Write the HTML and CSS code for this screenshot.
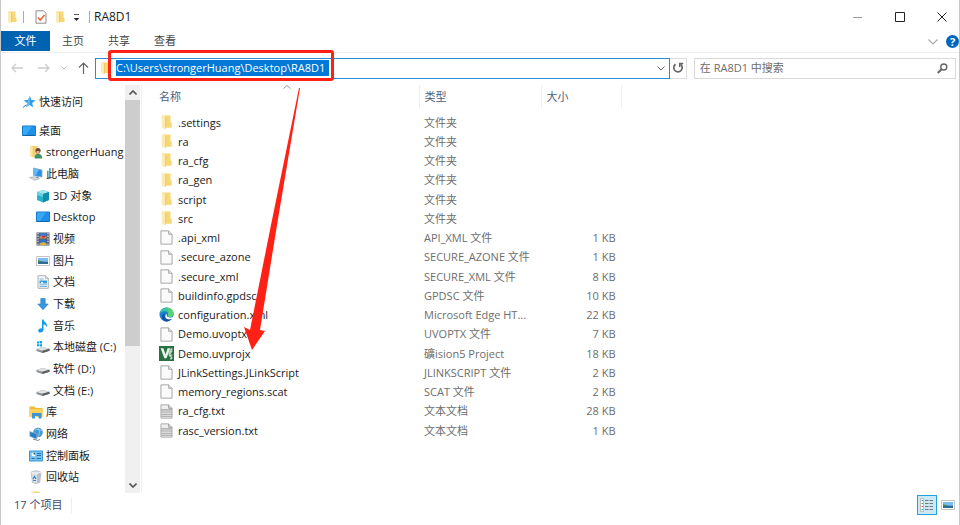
FILE: index.html
```html
<!DOCTYPE html>
<html lang="zh-CN">
<head>
  <meta charset="UTF-8" />
  <meta name="viewport" content="width=device-width, initial-scale=1.0" />
  <title>RA8D1</title>
  <link rel="stylesheet" href="styles.css">
</head>
<body>
  <!-- Icon set -->
  <svg class="sprite" aria-hidden="true">
    <symbol id="i-folder" viewBox="0 0 10 13">
      <path d="M1 .5h7.500v6H9.500V11H1z" fill="#f8d775"/>
      <path d="M1 .5l3 1V12.500L1 11z" fill="#fdebb5"/>
      <path d="M4 1.500V12.500l.7-1.500V1.700z" fill="#ecc564"/>
    </symbol>
    <symbol id="i-file" viewBox="0 0 12 14">
      <path d="M.8 .8h7.200l3.200 3.200v9.200H.8z" fill="#fafafa" stroke="#a3a3a3" stroke-width=".9"/>
      <path d="M8 .8V4h3.200" fill="#e9e9e9" stroke="#a3a3a3" stroke-width=".9"/>
    </symbol>
    <symbol id="i-text" viewBox="0 0 12 14">
      <path d="M.8 .8h7.200l3.200 3.200v9.200H.8z" fill="#eee" stroke="#aaa" stroke-width=".9"/>
      <path d="M8 .8V4h3.200" fill="#ddd" stroke="#999" stroke-width=".9"/>
      <path d="M1 5.500h10M1 7.500h10M1 9.500h10M1 11.500h10" stroke="#a0a0a0" stroke-width="1"/>
    </symbol>
    <symbol id="i-edge" viewBox="0 0 16 16">
      <circle cx="8" cy="8" r="7.500" fill="#1b7fd0"/>
      <path d="M.6 7C1.500 2.800 4.500 .5 8 .5c4.500 0 7.500 3 7.500 6.300 0 2.300-1.600 3.700-3.700 3.700-1.700 0-2.600-.7-2.300-1.500.4-.8.6-1.100.4-2C9.500 5.300 7.500 4.400 5.500 4.600 3.300 4.800 1.500 5.800.6 7z" fill="#3cc3a5"/>
      <path d="M8 .5c4.500 0 7.500 3 7.500 6.300 0 2.300-1.600 3.700-3.700 3.700-1.700 0-2.600-.7-2.300-1.500.4-.8.6-1.100.4-2C11 5 10.500 2 8 .5z" fill="#5fd36b"/>
      <path d="M5.800 8.500c-.3 3.500 2.500 5 5 4.700 1.500-.2 2.700-.9 3.300-1.400-1.300 2.400-3.700 3.700-6.400 3.600C4.500 15 3.300 12 3.500 10 3.700 8 4.800 7 6.500 6.600c-.4.500-.6 1.200-.7 1.900z" fill="#124f9f"/>
      <path d="M8.300 7.300c-.8 1.700.2 3.800 3.100 3.900 1.100 0 2.100-.2 3-.6l1.600.2v1.400l-2 .2c-2.300 1-5.700.9-6.900-1-.8-1.300-.3-3.500 1.200-4.100z" fill="#fff"/>
    </symbol>
    <symbol id="i-uvision" viewBox="0 0 14 14">
      <path d="M0 0h14v14H0z" fill="#2b7040"/>
      <path d="M1.500 2h2.600l2 6L8 2h2.500L7 11.500H5z" fill="#e8f3eb"/>
      <path d="M8.500 6.500L11 2h1.500v3L9.500 10z" fill="#b6d3be"/>
      <path d="M12.500 8.500h-2v1.700h1.500v1.800h-1.800" fill="none" stroke="#fff" stroke-width=".8"/>
    </symbol>
    <symbol id="i-star" viewBox="0 0 14 14">
      <path d="M8 1l1.300 3.900 4.200.3-3.300 2.700.9 4.300-3.600-2.300-3.400 2.200 1-4.100L1.500 5.300l4.300-.2z" fill="#2e9be6"/>
      <path d="M8 1l-.5 8.900L4.100 12.100l1-4.100" fill="#67bdf3"/>
      <path d="M1 12.500l3-2.500" stroke="#2878b8"/>
    </symbol>
    <symbol id="i-desktop" viewBox="0 0 14 14">
      <path d="M.5 2h13v9.500H.5z" fill="#1e90ea" stroke="#1678c8"/>
      <path d="M1 2.500h9L4 11H1z" fill="#37a9f5"/>
      <path d="M1 11.500h12" stroke="#0c5f9e" stroke-width=".8"/>
    </symbol>
    <symbol id="i-user" viewBox="0 0 14 14">
      <path d="M1 1h7.500v10L4 12.500 1 11z" fill="#f5d06f"/>
      <path d="M1 1l2.500 1v10.500L1 11z" fill="#fbe7aa"/>
      <circle cx="9" cy="5.500" r="2.600" fill="#6b4a3a"/>
      <path d="M7.500 6h3v3h-3z" fill="#e0a883"/>
      <path d="M5.500 13.500c0-3 1.300-4.700 3.700-4.700s4 1.700 4 4.700z" fill="#3c9468"/>
    </symbol>
    <symbol id="i-pc" viewBox="0 0 14 14">
      <path d="M4.500 1l8.500 2v7L4.500 8.500z" fill="#2792e3" stroke="#8ba8c1" stroke-width=".8"/>
      <path d="M5 1.600l5 1.100-3.500 5.700L5 8z" fill="#65baf5"/>
      <path d="M7 9.500l3 .5-1 1.500-2-.3z" fill="#8899a8"/>
      <path d="M.5 10.500l5-.8 5 2-5 1.500z" fill="#d2d9df" stroke="#97a3ad" stroke-width=".6"/>
    </symbol>
    <symbol id="i-cube" viewBox="0 0 14 14">
      <path d="M1 3l6-2 6 2v8l-6 2.500L1 11z" fill="#29b2cf"/>
      <path d="M1 3l6-2 6 2-6 2z" fill="#a5e8f0"/>
      <path d="M7 5l6-2v8l-6 2.500z" fill="#138ba9"/>
      <path d="M1 3l6 2v3L1 6z" fill="#64d2e2"/>
    </symbol>
    <symbol id="i-video" viewBox="0 0 14 14">
      <path d="M.5 .5h13v13H.5z" fill="#545b63"/>
      <path d="M3.500 1h7v5.500h-7z" fill="#3b79d4"/>
      <path d="M3.500 7.500h7V13h-7z" fill="#3472c9"/>
      <path d="M3.500 5l3-1.500 4 1.500v1.500h-7z" fill="#d98735"/>
      <path d="M6 4h3v1.500H6z" fill="#c42f38"/>
      <path d="M3.500 11.500l4-1.500 3 1.500V13h-7z" fill="#e0b23e"/>
      <path d="M2 1v12M12 1v12" stroke="#e4e7ea" stroke-width="1.300" stroke-dasharray="1.300 1.300"/>
    </symbol>
    <symbol id="i-picture" viewBox="0 0 14 14">
      <path d="M.5 2.500h13v9H.5z" fill="#fff" stroke="#b5b5b5" stroke-width=".8"/>
      <path d="M2 4h10v6H2z" fill="#79bdf0"/>
      <path d="M2 7c3-.5 6 1 10 .8V10H2z" fill="#2f6d91"/>
      <path d="M2 6c2 .5 3 1.300 5 2H2z" fill="#4b8c58"/>
    </symbol>
    <symbol id="i-docs" viewBox="0 0 14 14">
      <path d="M2 .7h7.500L12.300 3.500v9.800H2z" fill="#f5f8fa" stroke="#98a0a6" stroke-width=".8"/>
      <path d="M9.500 .7v2.800h2.800" fill="#d7e0e6" stroke="#98a0a6" stroke-width=".6"/>
      <path d="M3.500 4h4M3.500 11.500h7.500M3.500 9.800h7.500" stroke="#7ab3d8"/>
      <path d="M3.500 5.500h7.500v3H3.500z" fill="#3c9bd6"/>
      <path d="M5 7h2v1.500H5z" fill="#fff"/>
    </symbol>
    <symbol id="i-download" viewBox="0 0 14 14">
      <path d="M4.800 1.500h4.400V7h3L7 12.800 1.800 7h3z" fill="#3a96dd" stroke="#2278bd" stroke-width=".6"/>
    </symbol>
    <symbol id="i-music" viewBox="0 0 14 14">
      <path d="M6 .5h1.500c.3 2.800 4.500 3.500 3.500 8-.6-2-2-2.800-3.500-3.200v5.500c0 1.600-1.500 2.700-3 2.700s-2.500-.9-2.300-2.100C2.500 10 4.400 9 6 9.300z" fill="#1598e8"/>
    </symbol>
    <symbol id="i-drive" viewBox="0 0 14 14">
      <path d="M.5 8l6-2 7 1.800v2L6.500 12 .5 10z" fill="#8b8f92"/>
      <path d="M.5 8l6-2 7 1.800-7 2z" fill="#dfe1e2"/>
      <path d="M6.500 9.800l7-2v2l-7 2.200z" fill="#5b5f62"/>
    </symbol>
    <symbol id="i-system" viewBox="0 0 14 14">
      <use href="#i-drive" y="1"/>
      <path d="M1 1.500h2v2H1zM3.600 1.100H6v2.400H3.600zM1 4.200h2v2H1zM3.600 4.200H6v2.300H3.600z" fill="#00a8ee"/>
    </symbol>
    <symbol id="i-library" viewBox="0 0 14 14">
      <path d="M.5 1.500h5l1 1.500h7v9H.5z" fill="#f3b932"/>
      <path d="M.5 4h13v8H.5z" fill="#fbd25d"/>
      <path d="M3 8h9.500v5.500h-3V11H6v2.500H3z" fill="#3f94d4"/>
    </symbol>
    <symbol id="i-network" viewBox="0 0 14 14">
      <circle cx="9" cy="5.500" r="4.800" fill="#4598d6"/>
      <path d="M6 3c2-1.500 4.500 0 7 .5M9 1c2 2 2 6 0 9" fill="none" stroke="#a7d4f2" stroke-width=".8"/>
      <path d="M.8 4.500l7 2.300v5.500l-7-3z" fill="#237fc5" stroke="#a0b7c8" stroke-width=".7"/>
      <path d="M4 12l5 1.500 2-1.200" fill="none" stroke="#7c8b96"/>
    </symbol>
    <symbol id="i-control" viewBox="0 0 14 14">
      <path d="M.5 2h13v10H.5z" fill="#75c3ee" stroke="#3d95cf"/>
      <circle cx="4.500" cy="5.500" r="2" fill="#fff"/>
      <path d="M4.500 3.500v2h2a2 2 0 0 0-2-2z" fill="#1e5e98"/>
      <path d="M8 4.500h4M8 6.500h4M2.500 9.500h3M7.500 9.500h4.500" stroke="#2270ad"/>
    </symbol>
    <symbol id="i-bin" viewBox="0 0 14 14">
      <path d="M2 2l5-1.200L12 2l-1.300 10.500L7 13.500l-3.500-1z" fill="#dce1e5" stroke="#a8b0b6" stroke-width=".7"/>
      <path d="M8 3.500l4-1.500-1.300 10.500L8 13.200z" fill="#b9c1c7"/>
      <path d="M2 2l6 1.500L12 2" fill="none" stroke="#f7f8f9"/>
      <path d="M4 9l1.500-2.500L7 9M4.200 10.500h2.600" fill="none" stroke="#2586d0" stroke-width="1.200"/>
    </symbol>
  </svg>

  <div class="window">
    <header class="title-bar">
      <svg class="folder"><use href="#i-folder"/></svg>
      <span class="bar"></span>
      <button class="quick-button" aria-label="属性">
        <svg width="12" height="14" viewBox="0 0 12 14" fill="none">
          <path d="M1 .8h7.500l2.500 2.500v9.900H1z" fill="#fcfcfc" stroke="#8f8f8f"/>
          <path d="M3 7.500l2.300 2.500L9.500 5" stroke="#f06136" stroke-width="1.600"/>
        </svg>
      </button>
      <button class="quick-button new-folder" aria-label="新建文件夹"><svg class="folder"><use href="#i-folder"/></svg></button>
      <button class="quick-button small" aria-label="自定义快速访问工具栏">
        <svg width="7" height="8" viewBox="0 0 7 8"><path d="M1 1.500h5" stroke="#555"/><path d="M.8 5h5.400L3.500 8z" fill="#222"/></svg>
      </button>
      <span class="bar"></span>
      <h1 class="window-title">RA8D1</h1>
      <div class="window-buttons">
        <button aria-label="最小化"><svg width="10" height="10"><path d="M0 5.500h9" stroke="#999"/></svg></button>
        <button aria-label="最大化"><svg width="10" height="10"><path d="M.5 .5h9v9h-9z" fill="none" stroke="#222"/></svg></button>
        <button aria-label="关闭"><svg width="10" height="10"><path d="M.5 .5l9 9M9.500 .5l-9 9" stroke="#222"/></svg></button>
      </div>
    </header>

    <nav class="ribbon">
      <button class="tab active">文件</button>
      <button class="tab">主页</button>
      <button class="tab">共享</button>
      <button class="tab">查看</button>
      <button class="expand" aria-label="展开功能区"><svg width="10" height="6"><path d="M.5 .5L5 5l4.500-4.500" fill="none" stroke="#aaa" stroke-width="1.200"/></svg></button>
      <button class="help" aria-label="帮助">?</button>
    </nav>

    <div class="address-row">
      <div class="nav-buttons">
        <button class="nav" aria-label="后退"><svg width="12" height="10"><path d="M12 5H1M5 1L1 5l4 4" stroke="#ccc" stroke-width="1.300"/></svg></button>
        <button class="nav" aria-label="前进"><svg width="12" height="10"><path d="M0 5h11M7 1l4 4-4 4" stroke="#ccc" stroke-width="1.300"/></svg></button>
        <button class="nav recent" aria-label="最近浏览的位置"><svg width="6" height="4"><path d="M.5 .5L3 3 5.500 .5" stroke="#bbb"/></svg></button>
        <button class="nav up" aria-label="上移"><svg width="11" height="12"><path d="M5.500 12V1M1 5.500L5.500 1 10 5.500" stroke="#666" stroke-width="1.200"/></svg></button>
      </div>
      <div class="address">
        <svg class="folder"><use href="#i-folder"/></svg>
        <input class="path" type="text" aria-label="地址" value="C:\Users\strongerHuang\Desktop\RA8D1">
        <button class="history" aria-label="上一个位置"><svg width="8" height="5"><path d="M.5 .5L4 4 7.500 .5" fill="none" stroke="#666"/></svg></button>
      </div>
      <button class="refresh" aria-label="刷新">
        <svg width="12" height="12" viewBox="0 0 12 12" fill="none"><path d="M3.500 2.300a4.200 4.200 0 1 0 5 0" stroke="#666" stroke-width="1.700"/><path d="M7.700 5V1.500h3.500" stroke="#666" stroke-width="1.500"/></svg>
      </button>
      <form class="search">
        <input type="text" aria-label="搜索" placeholder="在 RA8D1 中搜索">
        <button type="button" aria-label="搜索"><svg width="11" height="11" viewBox="0 0 11 11" fill="none"><circle cx="6.800" cy="4" r="3" stroke="#666" stroke-width="1.400"/><path d="M4.500 6.300L.8 10" stroke="#666" stroke-width="2"/></svg></button>
      </form>
    </div>

    <div class="content">
      <ul class="tree">
        <li class="quick-access"><a href="#"><svg><use href="#i-star"/></svg>快速访问</a></li>
        <li><a href="#"><svg><use href="#i-desktop"/></svg>桌面</a></li>
        <li class="level-1"><a href="#"><svg><use href="#i-user"/></svg>strongerHuang</a></li>
        <li class="level-1"><a href="#"><svg><use href="#i-pc"/></svg>此电脑</a></li>
        <li class="level-2"><a href="#"><svg><use href="#i-cube"/></svg>3D 对象</a></li>
        <li class="level-2"><a href="#"><svg><use href="#i-desktop"/></svg>Desktop</a></li>
        <li class="level-2"><a href="#"><svg><use href="#i-video"/></svg>视频</a></li>
        <li class="level-2"><a href="#"><svg><use href="#i-picture"/></svg>图片</a></li>
        <li class="level-2"><a href="#"><svg><use href="#i-docs"/></svg>文档</a></li>
        <li class="level-2"><a href="#"><svg><use href="#i-download"/></svg>下载</a></li>
        <li class="level-2"><a href="#"><svg><use href="#i-music"/></svg>音乐</a></li>
        <li class="level-2"><a href="#"><svg><use href="#i-system"/></svg>本地磁盘 (C:)</a></li>
        <li class="level-2"><a href="#"><svg><use href="#i-drive"/></svg>软件 (D:)</a></li>
        <li class="level-2"><a href="#"><svg><use href="#i-drive"/></svg>文档 (E:)</a></li>
        <li class="level-1"><a href="#"><svg><use href="#i-library"/></svg>库</a></li>
        <li class="level-1"><a href="#"><svg><use href="#i-network"/></svg>网络</a></li>
        <li class="level-1"><a href="#"><svg><use href="#i-control"/></svg>控制面板</a></li>
        <li class="level-1"><a href="#"><svg><use href="#i-bin"/></svg>回收站</a></li>
        <li class="level-1 clipped"><svg><use href="#i-folder"/></svg></li>
      </ul>
      <div class="scrollbar">
        <button aria-label="向上滚动"><svg width="8" height="5"><path d="M.5 4.500L4 1l3.500 3.500" fill="none" stroke="#555" stroke-width="1.600"/></svg></button>
        <div class="thumb"></div>
        <button class="down" aria-label="向下滚动"><svg width="8" height="5"><path d="M.5 .5L4 4 7.500 .5" fill="none" stroke="#555" stroke-width="1.600"/></svg></button>
      </div>
      <main class="files-pane">
        <table class="files">
          <thead>
            <tr>
              <th class="name">名称<svg class="sort" width="8" height="4"><path d="M.5 3.500L4 .5l3.500 3" fill="none" stroke="#999"/></svg></th>
              <th class="type">类型</th>
              <th class="size">大小</th>
            </tr>
          </thead>
          <tbody>
            <tr><td><svg class="icon"><use href="#i-folder"/></svg>.settings</td><td>文件夹</td><td></td></tr>
            <tr><td><svg class="icon"><use href="#i-folder"/></svg>ra</td><td>文件夹</td><td></td></tr>
            <tr><td><svg class="icon"><use href="#i-folder"/></svg>ra_cfg</td><td>文件夹</td><td></td></tr>
            <tr><td><svg class="icon"><use href="#i-folder"/></svg>ra_gen</td><td>文件夹</td><td></td></tr>
            <tr><td><svg class="icon"><use href="#i-folder"/></svg>script</td><td>文件夹</td><td></td></tr>
            <tr><td><svg class="icon"><use href="#i-folder"/></svg>src</td><td>文件夹</td><td></td></tr>
            <tr><td><svg class="icon"><use href="#i-file"/></svg>.api_xml</td><td>API_XML 文件</td><td>1 KB</td></tr>
            <tr><td><svg class="icon"><use href="#i-file"/></svg>.secure_azone</td><td>SECURE_AZONE 文件</td><td>1 KB</td></tr>
            <tr><td><svg class="icon"><use href="#i-file"/></svg>.secure_xml</td><td>SECURE_XML 文件</td><td>8 KB</td></tr>
            <tr><td><svg class="icon"><use href="#i-file"/></svg>buildinfo.gpdsc</td><td>GPDSC 文件</td><td>10 KB</td></tr>
            <tr><td><svg class="icon"><use href="#i-edge"/></svg>configuration.xml</td><td>Microsoft Edge HT...</td><td>22 KB</td></tr>
            <tr><td><svg class="icon"><use href="#i-file"/></svg>Demo.uvoptx</td><td>UVOPTX 文件</td><td>7 KB</td></tr>
            <tr><td><svg class="icon"><use href="#i-uvision"/></svg>Demo.uvprojx</td><td>礦ision5 Project</td><td>18 KB</td></tr>
            <tr><td><svg class="icon"><use href="#i-file"/></svg>JLinkSettings.JLinkScript</td><td>JLINKSCRIPT 文件</td><td>2 KB</td></tr>
            <tr><td><svg class="icon"><use href="#i-file"/></svg>memory_regions.scat</td><td>SCAT 文件</td><td>2 KB</td></tr>
            <tr><td><svg class="icon"><use href="#i-text"/></svg>ra_cfg.txt</td><td>文本文档</td><td>28 KB</td></tr>
            <tr><td><svg class="icon"><use href="#i-text"/></svg>rasc_version.txt</td><td>文本文档</td><td>1 KB</td></tr>
          </tbody>
        </table>
      </main>
    </div>

    <footer class="status-bar">
      <span class="count">17 个项目</span>
      <div class="views">
        <button class="view active" aria-label="详细信息">
          <svg width="14" height="14" viewBox="0 0 14 14">
            <path d="M.5 .5h3v13h-3z" fill="#fff" stroke="#a9a9a9" stroke-width=".7"/>
            <path d="M1.500 2.500h1.500" stroke="#3b8ed0"/><path d="M1.500 5.500h1.500" stroke="#4b9b50"/><path d="M1.500 8.500h1.500" stroke="#d9534a"/><path d="M1.500 11.500h1.500" stroke="#3b8ed0"/>
            <path d="M5 2.500h3.500M5 5.500h3.500M5 8.500h3.500M5 11.500h3.500M9.500 2.500H13M9.500 5.500H13M9.500 8.500H13M9.500 11.500H13" stroke="#777"/>
          </svg>
        </button>
        <button class="view" aria-label="大缩略图"><svg width="14" height="14"><use href="#i-picture"/></svg></button>
      </div>
    </footer>
  </div>

  <!-- Red markup over the window -->
  <div class="mark-box"></div>
  <svg class="mark-arrow" width="62" height="264" viewBox="0 0 62 264" aria-hidden="true">
    <path d="M59 0h1L37 137 20 242l5 1-13 19-8-23 6 3L31 137z" fill="#ff2116"/>
  </svg>
</body>
</html>
```
FILE: styles.css
```css
* {
  box-sizing: border-box;
}

body {
  margin: 0;
  background: #fff;
  color: #1a1a1a;
  font-family: "Open Sans", "Noto Sans CJK SC", sans-serif;
  font-size: 11px;
  line-height: 16px;
}

button,
input {
  margin: 0;
  padding: 0;
  border: 0;
  background: none;
  color: inherit;
  font: inherit;
}

button {
  display: flex;
  align-items: center;
  justify-content: center;
}

svg {
  display: block;
  flex: none;
}

.sprite {
  position: absolute;
  width: 0;
  height: 0;
}

.folder {
  width: 10px;
  height: 13px;
}

.window {
  display: flex;
  flex-direction: column;
  height: 100vh;
  border: solid #c8c8c8;
  border-width: 0 1px;
}

/* Title bar */
.title-bar {
  display: flex;
  align-items: center;
  height: 31px;
  padding: 3px 0 0 6px;
}

.bar {
  width: 1px;
  height: 12px;
  margin: 0 4px 0 6px;
  background: #aaa;
}

.quick-button {
  width: 20px;
  height: 20px;
}

.quick-button:first-of-type {
  margin-left: 3px;
}

.quick-button.new-folder {
  width: 18px;
}

.quick-button.small {
  width: 14px;
}

.window-title {
  margin: 0;
  font-size: 12px;
  font-weight: normal;
}

.window-buttons {
  display: flex;
  margin-left: auto;
}

.window-buttons button {
  width: 42px;
  height: 28px;
}

.window-buttons button:last-child {
  margin-right: -4px;
}

/* Ribbon tabs */
.ribbon {
  display: flex;
  align-items: center;
  height: 22px;
  border-bottom: 1px solid #eee;
}

.tab {
  width: 46px;
  height: 20px;
  margin-bottom: 1px;
  color: #444;
}

.tab.active {
  width: 49px;
  background: #0063b1;
  color: #fff;
}

.expand {
  width: 18px;
  height: 20px;
  margin-left: auto;
}

.help {
  width: 13px;
  height: 13px;
  margin-left: 4px;
  border-radius: 50%;
  background: #0067c0;
  color: #fff;
  font-weight: bold;
  line-height: 13px;
}

/* Navigation, address and search */
.address-row {
  display: flex;
  align-items: center;
  height: 32px;
  padding: 0 3px 2px 0;
}

.nav-buttons {
  display: flex;
  width: 94px;
  padding-left: 3px;
}

.nav {
  width: 27px;
  height: 20px;
}

.nav.recent {
  width: 14px;
}

.nav.up {
  width: 24px;
}

.nav svg {
  fill: none;
}

.address {
  display: flex;
  flex: 575;
  align-items: center;
  height: 21px;
  padding-left: 4px;
  border: 1px solid #2a8ad4;
}

.path {
  width: 213px;
  height: 16px;
  margin-left: 6px;
  background: #0078d7;
  color: #fff;
}

.history {
  width: 16px;
  height: 18px;
  margin-left: auto;
}

.refresh {
  width: 17px;
  height: 21px;
  border: solid #ddd;
  border-width: 1px 1px 1px 0;
}

.search {
  display: flex;
  flex: 263;
  height: 21px;
  margin: 0 0 0 7px;
  border: 1px solid #d9d9d9;
}

.search input {
  flex: 1;
  min-width: 0;
  padding-left: 5px;
}

.search input::placeholder {
  color: #6d6d6d;
}

.search button {
  width: 25px;
}

/* Folder tree */
.content {
  display: flex;
  flex: 1;
  min-height: 0;
}

.tree {
  display: flex;
  flex-direction: column;
  width: 124px;
  margin: 0;
  padding: 6px 0 0 21px;
  overflow: hidden;
  list-style: none;
}

.tree li {
  flex: 1;
  min-height: 0;
}

.tree a {
  display: flex;
  align-items: center;
  gap: 3px;
  height: 100%;
  color: inherit;
  text-decoration: none;
  white-space: nowrap;
}

.tree svg {
  width: 14px;
  height: 14px;
}

.tree .quick-access {
  margin-bottom: 7px;
}

.level-1 {
  padding-left: 7px;
}

.level-2 {
  padding-left: 14px;
}

.tree .clipped {
  flex: none;
  height: 5px;
  padding-top: 3px;
}

.scrollbar {
  display: flex;
  flex-direction: column;
  width: 15px;
  background: #f0f0f0;
}

.scrollbar button {
  height: 15px;
}

.thumb {
  flex: 0 1 246px;
  background: #cdcdcd;
}

.scrollbar .down {
  margin-top: auto;
}

/* File list */
.files-pane {
  flex: 1;
  margin-left: 1px;
  border-left: 1px solid #f0f0f0;
}

.files {
  width: 480px;
  border-collapse: collapse;
  table-layout: fixed;
}

.files th {
  position: relative;
  height: 23px;
  padding: 0 0 0 5px;
  border-right: 1px solid #eee;
  color: #4c607a;
  font-weight: normal;
  text-align: left;
}

.files .name {
  width: 277px;
  padding-left: 17px;
}

.files .type {
  width: 122px;
}

.sort {
  position: absolute;
  top: 0;
  left: 51%;
}

.files tbody::before {
  content: "";
  display: block;
  height: 5px;
}

.files td {
  height: 19px;
  padding: 0 0 0 5px;
  color: #6d6d6d;
  white-space: nowrap;
}

.files tr:nth-child(4n) td {
  height: 20px;
}

.files td:first-child {
  padding-left: 17px;
  color: #1a1a1a;
}

.files td:last-child {
  padding-right: 6px;
  text-align: right;
}

.icon {
  display: inline-block;
  width: 15px;
  height: 15px;
  margin: -2px 4px 0 0;
  vertical-align: middle;
}

/* Status bar */
.status-bar {
  display: flex;
  align-items: center;
  justify-content: space-between;
  height: 32px;
  padding: 0 1px 8px 13px;
  color: #3b4a63;
}

.count {
  padding-right: 9px;
  border-right: 1px solid #eee;
}

.views {
  display: flex;
  gap: 1px;
}

.view {
  width: 20px;
  height: 20px;
}

.view.active {
  border: 1px solid #26a0da;
  background: #cbe8f6;
}

/* Red markup */
.mark-box {
  position: absolute;
  top: 50px;
  left: 108px;
  width: 226px;
  height: 31px;
  border: 3px solid #ff2116;
  border-radius: 3px;
}

.mark-arrow {
  position: absolute;
  top: 88px;
  left: 240px;
}
```
